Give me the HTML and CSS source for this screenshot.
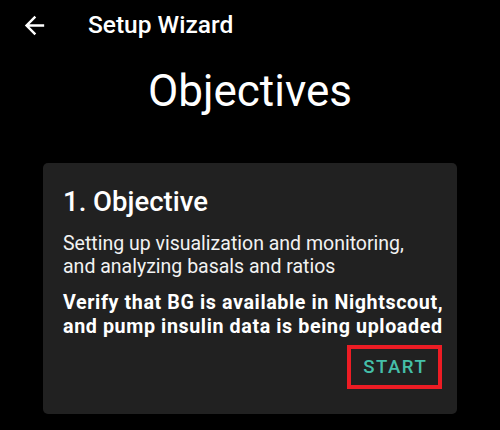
FILE: index.html
```html
<!DOCTYPE html>
<html>
<head>
<meta charset="utf-8">
<link rel="stylesheet" href="styles.css">
</head>
<body>
<header class="topbar">
  <svg class="back" viewBox="0 0 24 24" width="29" height="29"><path fill="#fff" d="M20 11H7.83l5.59-5.59L12 4l-8 8 8 8 1.41-1.41L7.83 13H20v-2z"/></svg>
  <span class="title">Setup Wizard</span>
</header>
<h1 class="page-title">Objectives</h1>
<section class="card">
  <h2 class="card-title">1. Objective</h2>
  <p class="desc">Setting up visualization and monitoring,<br>and analyzing basals and ratios</p>
  <p class="goal">Verify that BG is available in Nightscout,<br>and pump insulin data is being uploaded</p>
  <div class="actions">
    <div class="start">START</div>
  </div>
</section>
</body>
</html>
```
FILE: styles.css
```css
html, body {
  margin: 0;
  padding: 0;
  background: #000;
  color: #fff;
  font-family: Roboto, "Noto Sans", sans-serif;
}
.topbar {
  display: flex;
  align-items: center;
  height: 30px;
  padding: 10px 0 0 20px;
}
.back {
  display: block;
  flex: none;
}
.title {
  margin-left: 39px;
  font-size: 24.5px;
  font-weight: 500;
  line-height: 30px;
}
.page-title {
  margin: 25px 0 0 0;
  text-align: center;
  font-size: 44px;
  font-weight: 400;
  line-height: 52px;
}
.card {
  margin: 46px 0 0 43px;
  width: 414px;
  height: 251px;
  box-sizing: border-box;
  padding: 23px 10px 0 20px;
  background: #212121;
  border-radius: 5px;
}
.card-title {
  margin: 0;
  font-size: 27.5px;
  font-weight: 500;
  line-height: 32px;
}
.desc {
  margin: 14px 0 0 0;
  font-size: 19.5px;
  line-height: 23.4px;
  color: #f2f2f2;
  white-space: nowrap;
}
.goal {
  margin: 12px 0 0 0;
  font-size: 19.7px;
  font-weight: 700;
  line-height: 24.5px;
  letter-spacing: 0.6px;
  white-space: nowrap;
}
.actions {
  display: flex;
  justify-content: flex-end;
  margin: 5px 5px 0 0;
}
.start {
  width: 95px;
  height: 44px;
  box-sizing: border-box;
  border: 4px solid #ed1c24;
  display: flex;
  align-items: center;
  justify-content: center;
  padding-left: 1.5px;
  color: #45bfa9;
  font-size: 18.6px;
  font-weight: 500;
  letter-spacing: 1.5px;
}
```
